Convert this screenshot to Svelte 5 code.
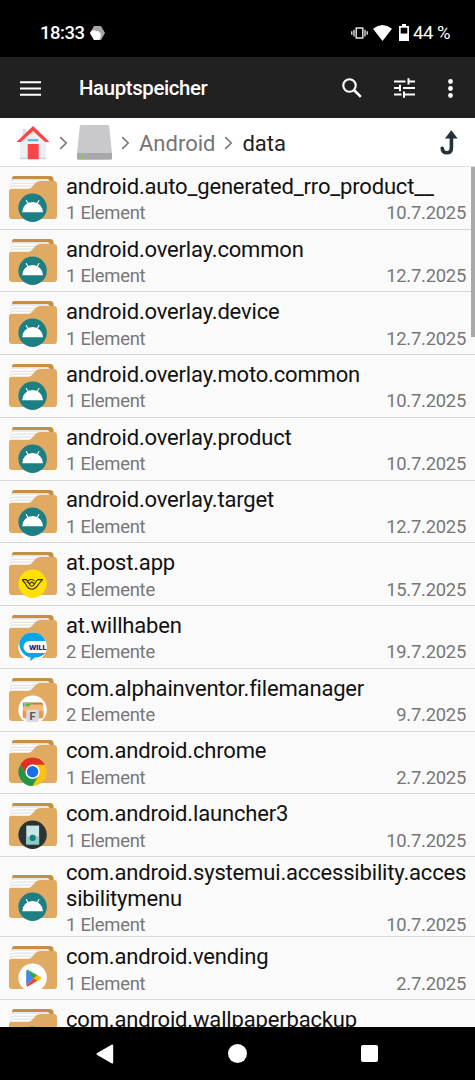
<script>
  const folders = [
    { name: 'android.auto_generated_rro_product__', count: 1, date: '10.7.2025', icon: 'android' },
    { name: 'android.overlay.common', count: 1, date: '12.7.2025', icon: 'android' },
    { name: 'android.overlay.device', count: 1, date: '12.7.2025', icon: 'android' },
    { name: 'android.overlay.moto.common', count: 1, date: '10.7.2025', icon: 'android' },
    { name: 'android.overlay.product', count: 1, date: '10.7.2025', icon: 'android' },
    { name: 'android.overlay.target', count: 1, date: '12.7.2025', icon: 'android' },
    { name: 'at.post.app', count: 3, date: '15.7.2025', icon: 'post' },
    { name: 'at.willhaben', count: 2, date: '19.7.2025', icon: 'willhaben' },
    { name: 'com.alphainventor.filemanager', count: 2, date: '9.7.2025', icon: 'files' },
    { name: 'com.android.chrome', count: 1, date: '2.7.2025', icon: 'chrome' },
    { name: 'com.android.launcher3', count: 1, date: '10.7.2025', icon: 'launcher' },
    { name: 'com.android.systemui.accessibility.accessibilitymenu', count: 1, date: '10.7.2025', icon: 'android' },
    { name: 'com.android.vending', count: 1, date: '2.7.2025', icon: 'play' },
    { name: 'com.android.wallpaperbackup', icon: 'android' },
  ];

  function countLabel(n) {
    return n === 1 ? '1 Element' : `${n} Elemente`;
  }
</script>

{#snippet chevron()}
  <svg class="chevron" width="9" height="14" viewBox="0 0 9 14" fill="none" stroke="#777" stroke-width="1.6">
    <path d="M1.2 1.2 7.2 7l-6 5.8"/>
  </svg>
{/snippet}

{#snippet badge(icon)}
  {#if icon === 'android'}
    <circle cx="23.6" cy="31.8" r="14.2" fill="#1b7f83"/>
    <path d="M13.2 36.2a10.4 10.2 0 0 1 20.8 0z" fill="#fff"/>
    <path d="m17.3 24.6 2 3.6M29.9 24.6l-2 3.6" stroke="#fff" stroke-width="1.1" stroke-linecap="round"/>
  {:else if icon === 'post'}
    <circle cx="23.6" cy="31.8" r="14.2" fill="#ffe000"/>
    <g fill="none" stroke="#2c2a10" stroke-width="1.1" stroke-linejoin="round">
      <path d="M13.3 27.600h4.200l3.200 5M13.300 27.600l1.700 2.600h1.400M15.500 30.200l2.600 4.400q2 3 5.600 2.600c5-.6 5.200-6 9.900-9.600h-4.800c-3 1.800-2.900 6.700-6 6.700-2.300 0-2.700-2.500-1.200-3.700 1.400-1 3.100-.1 2.700 1.200"/>
      <path d="M18 30.200c1.400-3.200 5.600-3.600 7.700-1.200"/>
    </g>
  {:else if icon === 'willhaben'}
    <circle cx="23.6" cy="31.8" r="14.2" fill="#fff"/>
    <path d="M10.6 26A14.2 14.2 0 0 1 36.6 26H20.5a5.6 5.6 0 0 0 0 12H36.4q-3.6 4.2-10.6 4.6l-4.5 3.6.3-3.6A14.2 14.2 0 0 1 10.6 26z" fill="#08a5e8"/>
    <text x="20" y="34.5" class="will">WILL</text>
  {:else if icon === 'files'}
    <circle cx="23.6" cy="31.8" r="14.2" fill="#fff"/>
    <path d="M14 24.5h18q2 0 2 2v4H14z" fill="#c47a37"/>
    <path d="M15 24.7h9l-2 4h-7z" fill="#7fcbb0"/>
    <path d="m16.5 25.8 8-.8-1 3h-7z" fill="#62b347"/>
    <path d="M13.8 28.6h6l2-2h12.6v12q0 1.6-1.6 1.6H15.4q-1.6 0-1.6-1.6z" fill="#f1ba7b"/>
    <path d="M13.8 33h20.6v5.6q0 1.6-1.6 1.6H15.4q-1.6 0-1.6-1.6z" fill="#e79a55"/>
    <rect x="17.3" y="31.7" width="12.6" height="12.5" rx="1.8" fill="#d9dadd"/>
    <text x="23.6" y="41.8" class="letter">F</text>
  {:else if icon === 'chrome'}
    <circle cx="23.6" cy="31.8" r="14.2" fill="#fbc116"/>
    <path d="M11.3 24.7A14.2 14.2 0 0 1 35.9 24.7H23.6L17.5 35.3z" fill="#de3228"/>
    <path d="M11.3 24.7A14.2 14.2 0 0 0 23.6 46l6.1-10.7H17.5z" fill="#249447"/>
    <circle cx="23.6" cy="31.8" r="7.2" fill="#fff"/>
    <circle cx="23.6" cy="31.8" r="5.7" fill="#1b6ce9"/>
  {:else if icon === 'launcher'}
    <circle cx="23.6" cy="31.8" r="14.2" fill="#2b3435"/>
    <rect x="17.3" y="22.6" width="12.8" height="18.8" fill="#c9e6e5"/>
    <path d="M17.3 33.5h12.8v7.9H17.3z" fill="#8ecbc8"/>
    <circle cx="23.7" cy="34.9" r="3.1" fill="#14817f"/>
  {:else if icon === 'play'}
    <circle cx="23.6" cy="31.8" r="14.2" fill="#fff"/>
    <path d="M17.2 24.6v14.8l7.4-7.4z" fill="#4387f5"/>
    <path d="M17.2 24.5q.8-1.1 2-.5l9.7 5.6-4.4 2.9z" fill="#32a852"/>
    <path d="M17.2 39.7q.8 1.1 2 .5l9.7-5.7-4.3-2.6z" fill="#ea4436"/>
    <path d="m28.3 29.2 3.7 2q1.2.9 0 1.8l-3.7 2-3.5-2.9z" fill="#fbbc05"/>
  {/if}
{/snippet}

<div class="screen">
  <div class="status">
    <span class="time">18:33</span>
    <svg class="hexagon" width="15" height="14" viewBox="0 0 15 14">
      <path d="M4 0h7l4 7-4 7H4L0 7z" fill="#a5a5a5"/>
      <path d="m1.2 5 3.8-1 1 1.6 2.3-.8 1.2 1.9.9-.2q1.2 4.6-1.4 7.5H4L0 7z" fill="#fff"/>
    </svg>
    <div class="status-right">
      <svg width="17" height="14" viewBox="0 0 17 14" fill="none" stroke="#eee">
        <rect x="5.2" y="2" width="6.6" height="10" stroke-width="1.4"/>
        <path d="M3 3.7v6.8M14 3.7v6.8M.8 5.2v3.6M16.2 5.2v3.6" stroke-width="1.3"/>
      </svg>
      <svg class="wifi" width="19" height="16" viewBox="0 0 19 16">
        <path d="M0 3.7Q9.5-3.5 19 3.7L9.5 16z" fill="#fff"/>
      </svg>
      <svg class="battery" width="10" height="17" viewBox="0 0 10 17">
        <path d="M3 0h4v2h3v15H0V2h3z" fill="#fff"/>
        <path d="M1.7 3.7h6.6v5.8H1.7z" fill="#000"/>
      </svg>
      <span>44 %</span>
    </div>
  </div>

  <header>
    <svg class="menu" width="21" height="15" viewBox="0 0 21 15" stroke="#fff" stroke-width="2">
      <path d="M0 1.3h21M0 7.5h21M0 13.7h21"/>
    </svg>
    <h1>Hauptspeicher</h1>
    <svg class="search" width="20" height="20" viewBox="0 0 20 20" fill="none" stroke="#fff" stroke-width="2.1">
      <circle cx="7.5" cy="7.5" r="6.2"/>
      <path d="m12 12 6.8 6.8" stroke-width="2.6"/>
    </svg>
    <svg class="tune" width="21" height="20" viewBox="0 0 21 20" stroke="#fff" stroke-width="2">
      <path d="M0 3.4h11.5M13.8 3.4H21M14.5.2v6.4M0 10h6.5M9 10h12M6 6.8v6.4M0 16.6h7.5M10 16.6h11M10 13.4v6.4"/>
    </svg>
    <svg class="more" width="5" height="19" viewBox="0 0 5 19" fill="#fff">
      <circle cx="2.5" cy="2.5" r="2.4"/>
      <circle cx="2.5" cy="9.5" r="2.4"/>
      <circle cx="2.5" cy="16.5" r="2.4"/>
    </svg>
  </header>

  <nav class="crumbs">
    <svg class="home" width="34" height="36" viewBox="0 0 34 36">
      <path d="M6.3 4h4.5v10H6.3z" fill="#dfe3e4"/>
      <path d="M4 14.5 17 4l13 10.5v19.7H4z" fill="#eceff0"/>
      <path d="M4 32.5h26v1.7H4z" fill="#d5d8da"/>
      <path d="M11.7 19h11v15.2h-11z" fill="#fb4448"/>
      <path d="M11.7 14.2h10.6v2H11.7z" fill="#4bb3e6"/>
      <path d="M.5 17 17 1l16.5 16h-4.3L17 6 4.8 17z" fill="#fb4448"/>
    </svg>
    {@render chevron()}
    <svg class="drive" width="35" height="35" viewBox="0 0 35 35">
      <path d="M4.2 0h26.6q1.2 0 1.4 1.4L35 28.5H0L2.8 1.4Q3 0 4.2 0z" fill="#c9c9cb"/>
      <path d="M0 28h35v5.3q0 1.5-1.5 1.5h-32Q0 34.8 0 33.3z" fill="#a8a8aa"/>
      <circle cx="5.3" cy="31.4" r="1.5" fill="#83d01b"/>
    </svg>
    {@render chevron()}
    <span class="crumb">Android</span>
    {@render chevron()}
    <span class="crumb current">data</span>
    <svg class="up" width="18" height="26" viewBox="0 0 18 26">
      <path d="M2.2 18.2q.3 4.6 4.6 4.6 4.6 0 4.6-5V7" fill="none" stroke="#26313a" stroke-width="3.6" stroke-linecap="round"/>
      <path d="M11.3.2 17.7 8.6H4.9z" fill="#26313a"/>
    </svg>
  </nav>

  <main>
    {#each folders as folder}
      <div class="row">
        <svg class="folder" width="48" height="46" viewBox="0 0 48 46">
          <path d="M5 0h36q3.6 0 3.6 4v8H3V3q0-3 2-3z" fill="#c78f45"/>
          <path d="M1.5 6q0-3 3-3H39l3 3v12H1.5z" fill="#e4e4e4"/>
          <path d="M1.5 7q0-2.2 3-2.2H36V18H1.5z" fill="#fff"/>
          <path d="M1.5 9.2q.2-2 3-2H33M1.5 12q.2-2 3-2H30" fill="none" stroke="#d6d6d6" stroke-width=".9"/>
          <path d="M0 15.5q0-2.8 2.8-2.8h16.7q2 0 3.5-1.6l4-4.5q1.7-1.600 4-1.600h14q3 0 3 3v32q0 3-3 3H3q-3 0-3-3z" fill="#e0aa62"/>
          {@render badge(folder.icon)}
        </svg>
        <div class="info">
          <div class="name">{folder.name}</div>
          <div class="meta">
            {#if folder.count}
              <span>{countLabel(folder.count)}</span>
              <span>{folder.date}</span>
            {/if}
          </div>
        </div>
      </div>
    {/each}
    <div class="scrollbar"></div>
  </main>

  <footer>
    <svg width="18" height="20" viewBox="0 0 18 20">
      <path d="M1.2 9 15.5.7q1.7-.7 1.7 1v16.6q0 1.7-1.7 1L1.2 11q-1.5-1 0-2z" fill="#fff"/>
    </svg>
    <div class="nav-home"></div>
    <div class="nav-recent"></div>
  </footer>
</div>

<style>
  :global(body) {
    margin: 0;
  }

  .screen {
    width: 475px;
    height: 1080px;
    display: flex;
    flex-direction: column;
    overflow: hidden;
    background: #fafafa;
    font-family: Roboto, sans-serif;
  }

  svg {
    flex-shrink: 0;
    display: block;
  }

  .status {
    display: flex;
    align-items: center;
    height: 57px;
    padding: 8px 25px 0 40px;
    box-sizing: border-box;
    flex-shrink: 0;
    background: #000;
    color: #fff;
    font-size: 18.5px;
    font-weight: 500;
    letter-spacing: -0.5px;
  }

  .hexagon {
    margin-left: 6px;
  }

  .status-right {
    display: flex;
    align-items: center;
    margin-left: auto;
    font-weight: 400;
  }

  .wifi {
    margin-left: 5px;
  }

  .battery {
    margin: 0 4px 0 7px;
  }

  header {
    display: flex;
    align-items: center;
    height: 61px;
    padding: 1px 22px 0 20px;
    box-sizing: border-box;
    flex-shrink: 0;
    background: #212121;
    color: #fff;
  }

  h1 {
    margin: 0 auto 0 38px;
    font-size: 20.4px;
    font-weight: 500;
    letter-spacing: -0.37px;
  }

  .tune {
    margin-left: 32px;
  }

  .more {
    margin-left: 33px;
  }

  .crumbs {
    display: flex;
    align-items: center;
    height: 49px;
    padding: 1px 17px 0 16px;
    box-sizing: border-box;
    flex-shrink: 0;
    background: #fff;
    border-bottom: 1px solid #dedede;
    font-size: 22px;
  }

  .chevron {
    margin: 0 9px;
  }

  .crumb {
    padding-top: 2px;
    color: #757575;
  }

  .crumb.current {
    color: #212121;
  }

  .up {
    margin-left: auto;
  }

  main {
    position: relative;
    flex: 1;
    min-height: 0;
    overflow: hidden;
  }

  .row {
    display: flex;
    align-items: center;
    min-height: 62.74px;
    padding: 1px 9px 0;
    box-sizing: border-box;
    border-bottom: 1px solid #d6d6d6;
  }

  .folder {
    margin-top: 1px;
    overflow: visible;
  }

  .info {
    flex: 1;
    min-width: 0;
    margin-left: 9px;
    padding: 1.6px 0 0.4px;
  }

  .name {
    margin-right: -5px;
    font-size: 22px;
    line-height: 26px;
    letter-spacing: -0.17px;
    color: #111;
    word-break: break-all;
  }

  .meta {
    display: flex;
    justify-content: space-between;
    margin-top: 1.4px;
    height: 23px;
    font-size: 18.4px;
    line-height: 23px;
    letter-spacing: -0.25px;
    color: #777;
  }

  .will {
    font-family: 'Open Sans', sans-serif;
    font-size: 7px;
    font-weight: 800;
    letter-spacing: -0.2px;
    fill: #1c2270;
  }

  .letter {
    font-size: 11px;
    font-weight: 700;
    text-anchor: middle;
    fill: #54565a;
  }

  .scrollbar {
    position: absolute;
    top: 0;
    right: 0;
    width: 4px;
    height: 170px;
    background: #a9a9a9;
  }

  footer {
    display: flex;
    align-items: center;
    justify-content: space-between;
    height: 53px;
    padding: 0 97px 0 96px;
    box-sizing: border-box;
    flex-shrink: 0;
    background: #000;
  }

  .nav-home {
    width: 19px;
    height: 19px;
    border-radius: 50%;
    background: #fff;
  }

  .nav-recent {
    width: 17px;
    height: 17px;
    border-radius: 2px;
    background: #fff;
  }
</style>
